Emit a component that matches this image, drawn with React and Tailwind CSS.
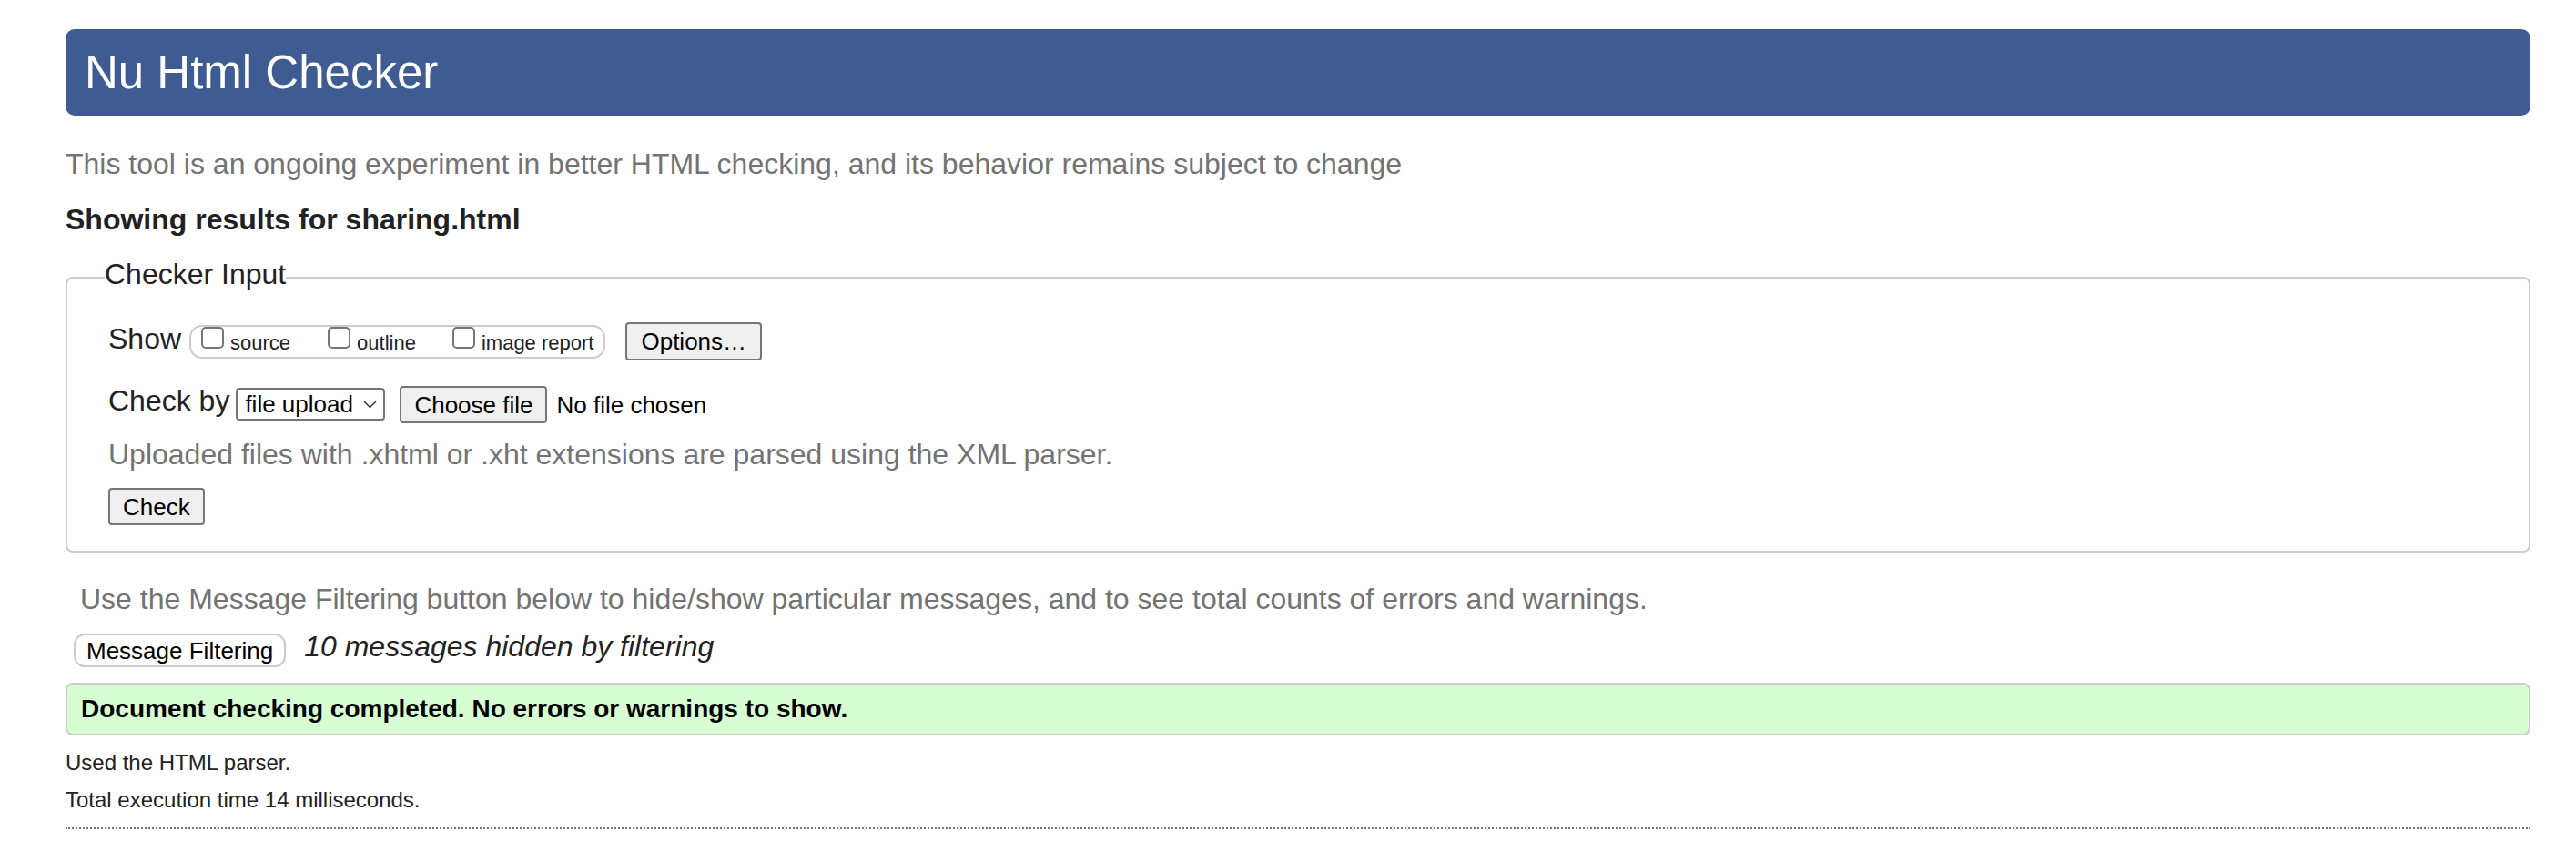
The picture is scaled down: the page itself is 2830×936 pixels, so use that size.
import React from "react";

function Box({ label }) {
  return (
    <span className="flex items-start">
      <span className="block w-[25px] h-[24px] rounded-[5px] border-2 border-[#767676] bg-white" />
      <span className="ml-[7px] mt-[5px] text-[22px] leading-[25px]">{label}</span>
    </span>
  );
}

export default function App() {
  return (
    <div className="min-h-screen bg-white pl-[72px] pr-[50px] pt-[32px] text-[#222222] font-['Liberation_Sans',Arial,Helvetica,sans-serif]">
      <h1 className="h-[95px] rounded-[10px] bg-[#3e5c91] pl-[21px] flex items-center text-[51px] leading-[59px] font-normal text-white">
        Nu Html Checker
      </h1>

      <p className="mt-[35px] text-[32px] leading-[37px] text-[#737373]">
        This tool is an ongoing experiment in better HTML checking, and its behavior remains subject to change
      </p>

      <p className="mt-[24px] text-[32px] leading-[37px] font-bold text-[#1f2125]">
        Showing results for sharing.html
      </p>

      <div className="mt-[44px] border-2 border-[#cccccc] rounded-[8px]">
        <div className="ml-[41px] -mt-[23px] w-fit bg-white text-[32px] leading-[37px]">
          Checker Input
        </div>
        <div className="pl-[45px] pb-[28px]">
          <div className="mt-[34px] flex items-start">
            <span className="text-[32px] leading-[37px]">Show</span>
            <div className="ml-[9px] mt-[3px] flex items-start h-[37px] border-2 border-[#cccccc] rounded-[14px] px-[11px]">
              <Box label="source" />
              <span className="ml-[41px]">
                <Box label="outline" />
              </span>
              <span className="ml-[40px]">
                <Box label="image report" />
              </span>
            </div>
            <button className="ml-[22px] h-[42px] px-[15px] flex items-center border-2 border-[#767676] rounded-[4px] bg-[#efefef] text-[26px] leading-[30px] text-black">
              Options…
            </button>
          </div>

          <div className="mt-[26px] flex items-start">
            <span className="text-[32px] leading-[37px]">Check by</span>
            <div className="ml-[7px] mt-[4px] h-[36px] w-[164px] flex items-center justify-between border-2 border-[#767676] rounded-[4px] bg-white pl-[8px] pr-[7px] text-[26px] leading-[30px] text-black">
              <span>file upload</span>
              <svg width="15" height="9" viewBox="0 0 15 9" fill="none">
                <path d="M1 1l6.5 6.5L14 1" stroke="#333" strokeWidth="1.4" />
              </svg>
            </div>
            <button className="ml-[16px] mt-[2px] h-[41px] px-[14px] flex items-center border-2 border-[#767676] rounded-[4px] bg-[#efefef] text-[26px] leading-[30px] text-black">
              Choose file
            </button>
            <span className="ml-[10px] mt-[2px] h-[41px] flex items-center text-[26px] leading-[30px] text-black">
              No file chosen
            </span>
          </div>

          <p className="mt-[16px] text-[32px] leading-[37px] text-[#737373]">
            Uploaded files with .xhtml or .xht extensions are parsed using the XML parser.
          </p>

          <button className="mt-[18px] h-[41px] px-[14px] flex items-center border-2 border-[#767676] rounded-[4px] bg-[#efefef] text-[26px] leading-[30px] text-black">
            Check
          </button>
        </div>
      </div>

      <p className="mt-[33px] ml-[16px] text-[32px] leading-[37px] text-[#737373]">
        Use the Message Filtering button below to hide/show particular messages, and to see total counts of errors and warnings.
      </p>

      <div className="mt-[19px] flex items-start">
        <button className="ml-[9px] h-[37px] px-[12px] flex items-center border-2 border-[#cccccc] rounded-[12px] bg-white text-[26px] leading-[30px] text-black">
          Message Filtering
        </button>
        <span className="ml-[20px] -mt-[4px] text-[32px] leading-[37px] italic">
          10 messages hidden by filtering
        </span>
      </div>

      <div className="mt-[17px] h-[58px] flex items-center border-2 border-[#cccccc] rounded-[8px] bg-[#d7fdd2] pl-[15px] text-[28px] leading-[32px] font-bold text-black">
        Document checking completed. No errors or warnings to show.
      </div>

      <p className="mt-[16px] text-[24px] leading-[28px]">Used the HTML parser.</p>
      <p className="mt-[13px] text-[24px] leading-[28px]">Total execution time 14 milliseconds.</p>

      <div className="mt-[16px] border-t-2 border-dotted border-[#777777]" />
    </div>
  );
}
